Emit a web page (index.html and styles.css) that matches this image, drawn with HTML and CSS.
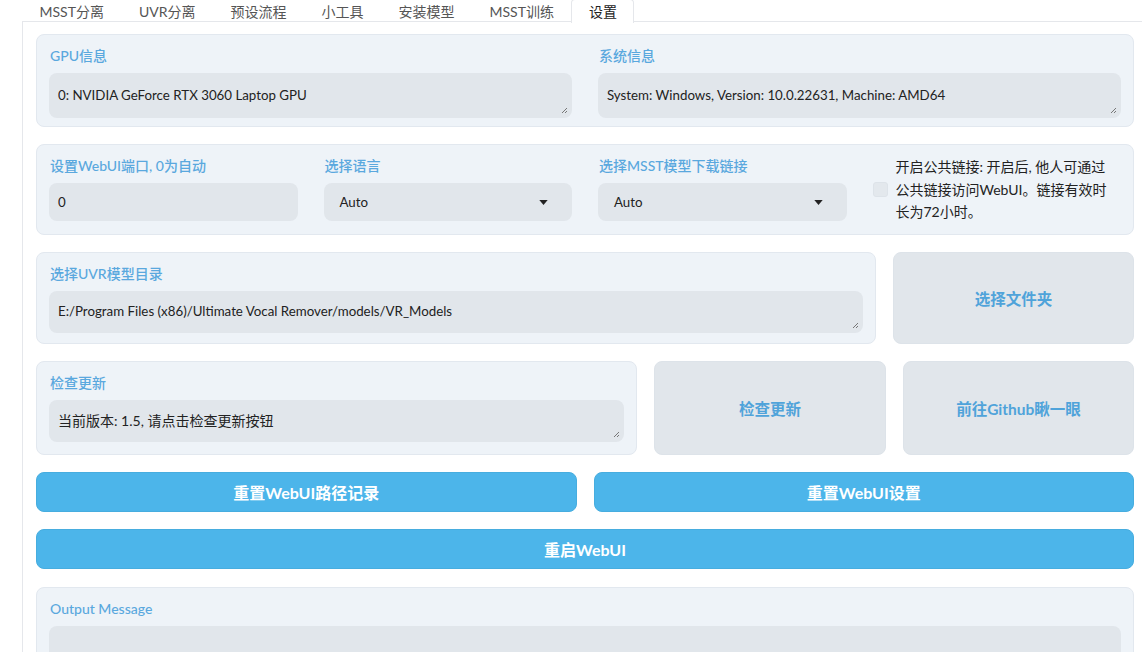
FILE: index.html
```html
<!DOCTYPE html>
<html lang="zh">
<head>
<meta charset="utf-8">
<title>设置</title>
<link rel="stylesheet" href="styles.css">
</head>
<body>
<div class="app">
  <div class="tabs">
    <div class="tab">MSST分离</div>
    <div class="tab">UVR分离</div>
    <div class="tab">预设流程</div>
    <div class="tab">小工具</div>
    <div class="tab">安装模型</div>
    <div class="tab">MSST训练</div>
    <div class="tab active">设置</div>
  </div>
  <div class="panel">
    <div class="block cols2">
      <div class="field">
        <div class="label">GPU信息</div>
        <div class="textarea ta45 latin">0: NVIDIA GeForce RTX 3060 Laptop GPU<svg class="grip" viewBox="0 0 8 8"><path d="M7 2 L2 7 M7 5 L5 7"/></svg></div>
      </div>
      <div class="field">
        <div class="label">系统信息</div>
        <div class="textarea ta45 latin">System: Windows, Version: 10.0.22631, Machine: AMD64<svg class="grip" viewBox="0 0 8 8"><path d="M7 2 L2 7 M7 5 L5 7"/></svg></div>
      </div>
    </div>

    <div class="block cols4">
      <div class="field">
        <div class="label">设置WebUI端口, 0为自动</div>
        <div class="input latin">0</div>
      </div>
      <div class="field">
        <div class="label">选择语言</div>
        <div class="input select latin"><span>Auto</span><svg class="caret" viewBox="0 0 10 6"><path d="M0 0 H10 L5 6 Z"/></svg></div>
      </div>
      <div class="field">
        <div class="label">选择MSST模型下载链接</div>
        <div class="input select latin"><span>Auto</span><svg class="caret" viewBox="0 0 10 6"><path d="M0 0 H10 L5 6 Z"/></svg></div>
      </div>
      <div class="check">
        <span class="box"></span>
        <span class="check-text">开启公共链接: 开启后, 他人可通过<br>公共链接访问WebUI。链接有效时<br>长为72小时。</span>
      </div>
    </div>

    <div class="row r3">
      <div class="block">
        <div class="label">选择UVR模型目录</div>
        <div class="textarea ta42 latin">E:/Program Files (x86)/Ultimate Vocal Remover/models/VR_Models<svg class="grip" viewBox="0 0 8 8"><path d="M7 2 L2 7 M7 5 L5 7"/></svg></div>
      </div>
      <button class="gbtn">选择文件夹</button>
    </div>

    <div class="row r4">
      <div class="block">
        <div class="label">检查更新</div>
        <div class="textarea ta42">当前版本: 1.5, 请点击检查更新按钮<svg class="grip" viewBox="0 0 8 8"><path d="M7 2 L2 7 M7 5 L5 7"/></svg></div>
      </div>
      <button class="gbtn">检查更新</button>
      <button class="gbtn">前往Github瞅一眼</button>
    </div>

    <div class="row r5">
      <button class="bbtn">重置WebUI路径记录</button>
      <button class="bbtn">重置WebUI设置</button>
    </div>

    <button class="bbtn">重启WebUI</button>

    <div class="block out">
      <div class="label">Output Message</div>
      <div class="textarea ta60"></div>
    </div>
  </div>
</div>
</body>
</html>
```
FILE: styles.css
```css
html, body {
  margin: 0;
  padding: 0;
  background: #ffffff;
  overflow: hidden;
}
body {
  font-family: Lato, "Noto Sans CJK SC", sans-serif;
  font-size: 14px;
  color: #222;
}
.app {
  margin-left: 22px;
  width: 1125px;
}
.tabs {
  display: flex;
  height: 22px;
  border-bottom: 1px solid #e5e7eb;
  margin-top: -1px;
}
.tab {
  padding: 0 16.5px;
  line-height: 23px;
  height: 23px;
  color: #555;
  font-size: 14px;
  border: 1px solid transparent;
  border-bottom: none;
}
.tab.active {
  color: #222;
  background: #fff;
  border-color: #e5e7eb;
  margin-bottom: -1px;
  border-radius: 4px 4px 0 0;
}
.panel {
  border-left: 1px solid #e5e7eb;
  padding: 12px 13px 40px 13px;
  display: flex;
  flex-direction: column;
  gap: 17px;
}
.block {
  background: #eef3f8;
  border: 1px solid #e2e8ef;
  border-radius: 8px;
  padding: 11px 12px 9px 12px;
  box-sizing: border-box;
}
.label {
  color: #5aa8de;
  font-size: 14px;
  font-weight: 500;
  line-height: 20px;
  height: 20px;
  margin-bottom: 7px;
  padding-left: 1px;
}
.cols2 {
  display: grid;
  grid-template-columns: 1fr 1fr;
  column-gap: 26px;
  height: 93px;
}
.cols4 {
  display: grid;
  grid-template-columns: 1fr 1fr 1fr 1fr;
  column-gap: 26px;
  height: 91px;
}
.textarea {
  position: relative;
  background: #e1e6eb;
  border-radius: 8px;
  padding: 0 9px;
  display: flex;
  align-items: center;
  box-sizing: border-box;
  color: #222;
  font-size: 14px;
}
.latin {
  font-size: 13.3px;
}
.ta45 { height: 45px; padding-bottom: 2px; }
.ta42 { height: 42px; padding-bottom: 2px; }
.ta60 { height: 60px; }
.grip {
  position: absolute;
  right: 4px;
  bottom: 4px;
  width: 8px;
  height: 8px;
  fill: none;
  stroke: #777;
  stroke-width: 1;
}
.input {
  background: #e1e6eb;
  border-radius: 8px;
  height: 38px;
  padding: 0 9px;
  display: flex;
  align-items: center;
  box-sizing: border-box;
}
.select {
  padding: 0 24px 0 16px;
  justify-content: space-between;
}
.caret {
  width: 9px;
  height: 5px;
  fill: #222;
}
.check {
  display: flex;
  align-items: flex-start;
  gap: 8px;
}
.box {
  flex: none;
  width: 15px;
  height: 15px;
  margin-top: 26px;
  background: #e3e8ed;
  border: 1px solid #dde3e9;
  border-radius: 3px;
  box-sizing: border-box;
}
.check-text {
  line-height: 22.5px;
  font-size: 14px;
  color: #222;
  white-space: nowrap;
}
.row {
  display: grid;
  column-gap: 17px;
}
.r3 {
  grid-template-columns: 840px 1fr;
  height: 92px;
}
.r4 {
  grid-template-columns: 601px 232px 1fr;
  height: 94px;
}
.r5 {
  grid-template-columns: 1fr 1fr;
  height: 40px;
}
.gbtn {
  font-family: Lato, "Noto Sans CJK SC", sans-serif;
  background: #e1e6eb;
  border: 1px solid #dde3e9;
  border-radius: 8px;
  color: #4fa3da;
  font-size: 15.5px;
  font-weight: 700;
  cursor: pointer;
}
.bbtn {
  font-family: Lato, "Noto Sans CJK SC", sans-serif;
  background: #4cb5ea;
  border: 1px solid #47addf;
  border-radius: 8px;
  color: #ffffff;
  font-size: 16px;
  font-weight: 700;
  height: 40px;
  cursor: pointer;
}
.out {
  height: 90px;
  margin-top: 1px;
}
```
